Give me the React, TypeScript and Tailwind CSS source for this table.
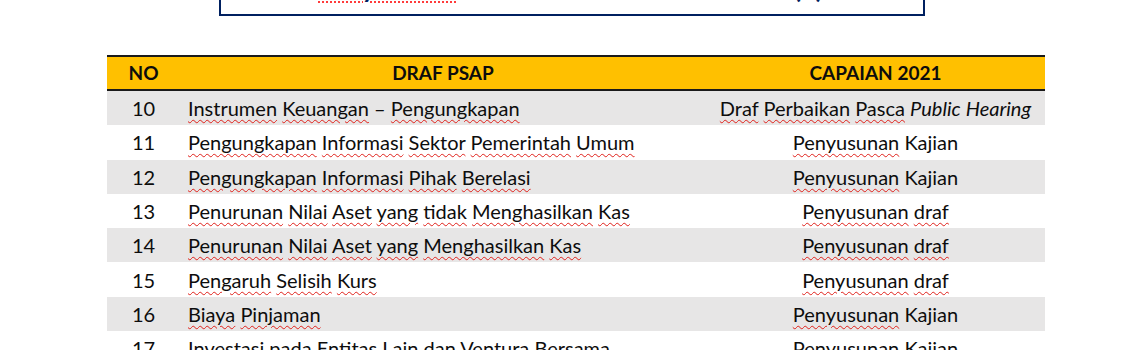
import React from "react";

type Cell = { text: string; mark?: boolean; italic?: boolean };

const w = (s: string): Cell[] => s.split(" ").map((t) => ({ text: t, mark: true }));

const rows: { no: number; draf: Cell[]; capaian: Cell[] }[] = [
  {
    no: 10,
    draf: [
      { text: "Instrumen", mark: true },
      { text: "Keuangan", mark: true },
      { text: "–" },
      { text: "Pengungkapan", mark: true },
    ],
    capaian: [
      { text: "Draf", mark: true },
      { text: "Perbaikan", mark: true },
      { text: "Pasca", mark: true },
      { text: "Public", italic: true },
      { text: "Hearing", italic: true },
    ],
  },
  { no: 11, draf: w("Pengungkapan Informasi Sektor Pemerintah Umum"), capaian: [{ text: "Penyusunan", mark: true }, { text: "Kajian" }] },
  { no: 12, draf: w("Pengungkapan Informasi Pihak Berelasi"), capaian: [{ text: "Penyusunan", mark: true }, { text: "Kajian" }] },
  { no: 13, draf: w("Penurunan Nilai Aset yang tidak Menghasilkan Kas"), capaian: w("Penyusunan draf") },
  { no: 14, draf: w("Penurunan Nilai Aset yang Menghasilkan Kas"), capaian: w("Penyusunan draf") },
  { no: 15, draf: w("Pengaruh Selisih Kurs"), capaian: w("Penyusunan draf") },
  { no: 16, draf: w("Biaya Pinjaman"), capaian: [{ text: "Penyusunan", mark: true }, { text: "Kajian" }] },
  { no: 17, draf: w("Investasi pada Entitas Lain dan Ventura Bersama"), capaian: [{ text: "Penyusunan", mark: true }, { text: "Kajian" }] },
];

function Words({ cells }: { cells: Cell[] }) {
  return (
    <>
      {cells.map((c, i) => (
        <React.Fragment key={i}>
          {i > 0 && " "}
          <span
            className={
              (c.mark ? "underline decoration-wavy decoration-[#e0201a] decoration-1 underline-offset-[3px] " : "") +
              (c.italic ? "italic" : "")
            }
          >
            {c.text}
          </span>
        </React.Fragment>
      ))}
    </>
  );
}

export default function App() {
  return (
    <div className="w-[1138px] h-[350px] bg-white overflow-hidden font-['Lato',sans-serif] text-[#0d0d0d]">
      {/* title box, mostly scrolled off the top */}
      <div className="ml-[219px] w-[706px] h-[60px] -mt-[44px] border-2 border-[#002060] flex items-end pb-[13px] text-[#002060] font-bold text-[26px] leading-none">
        <span className="ml-[97px] underline decoration-dotted decoration-[#ff3b3b] decoration-2 underline-offset-[3px]">
          Penyusunan
        </span>
        <span className="ml-[8px]">Standar Akuntansi Tahun 2021</span>
        <span className="ml-auto mr-[100px]">(1)</span>
      </div>

      {/* table */}
      <div className="ml-[107px] mt-[39px] w-[938px]">
        <div className="grid grid-cols-[73px_526px_339px] h-[36px] bg-[#ffc000] border-y-2 border-[#1a1a1a] font-bold text-[19px] items-center text-center">
          <div>NO</div>
          <div>DRAF PSAP</div>
          <div>CAPAIAN 2021</div>
        </div>
        {rows.map((r, i) => (
          <div
            key={r.no}
            className={
              "grid grid-cols-[73px_526px_339px] h-[34.3px] items-center text-[20px] whitespace-nowrap " +
              (i % 2 === 0 ? "bg-[#e7e6e6]" : "bg-white")
            }
          >
            <div className="text-center">{r.no}</div>
            <div className="pl-[8px]">
              <Words cells={r.draf} />
            </div>
            <div className="text-center">
              <Words cells={r.capaian} />
            </div>
          </div>
        ))}
      </div>
    </div>
  );
}
